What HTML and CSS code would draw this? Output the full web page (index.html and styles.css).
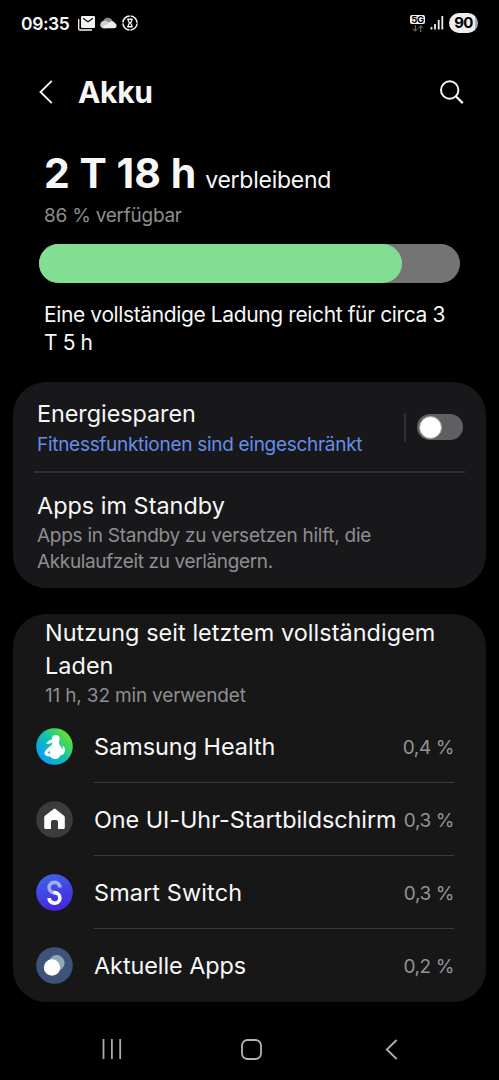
FILE: index.html
```html
<!DOCTYPE html>
<html lang="de">
<head>
<meta charset="utf-8">
<title>Akku</title>
<link rel="stylesheet" href="styles.css">
</head>
<body>
<div class="status">
  <span class="clock">09:35</span>
  <svg class="s-mail" width="17" height="15" viewBox="0 0 17 15"><path d="M.7 3v9.800q0 1.200 1.200 1.200H14" fill="none" stroke="#f4f4f4" stroke-width="1.300"/><rect x="3" y="0" width="14" height="12" rx="1.200" fill="#f4f4f4"/><path d="M5 2.300l5 3.500 5-3.500" fill="none" stroke="#111" stroke-width="1.300"/></svg>
  <svg class="s-cloud" width="17" height="12" viewBox="0 0 17 12"><path d="M3 5C4 1.500 6 .4 8.500.8c2.500.3 3.500 1.700 4 3.500L9 8z" fill="#8b8b8b"/><path d="M3.800 3.800Q7 3.500 10 6l5.500 3.500-10 1.700H3.500C-1 11-.8 4.500 3.800 3.800z" fill="#cfcfcf"/><path d="M8 6.500q2.500-3 5-2.200 1.500.5 1.600 1.800 2 .5 2 2.500 0 2.600-2.600 2.600H3.500L2 10.500z" fill="#eee"/></svg>
  <svg class="s-timer" width="16" height="16" viewBox="0 0 16 16"><circle cx="8" cy="8" r="7.100" fill="none" stroke="#f4f4f4" stroke-width="1.500" stroke-dasharray="10.150 1" stroke-dashoffset="-.5"/><path d="M5.300 4.200h5.400M5.300 11.800h5.400" stroke="#f4f4f4" stroke-width="1.400"/><path d="M6.300 4v1.800L7.500 8l-1.200 2.200V12M9.700 4v1.800L8.500 8l1.200 2.200V12" fill="none" stroke="#f4f4f4" stroke-width="1.300"/></svg>
  <span class="grow"></span>
  <span class="net"><b>5G</b><svg width="12" height="7" viewBox="0 0 12 7"><path d="M3.300 0v6M.8 3.700l2.500 2.500 2.500-2.500M8.700 7V1M6.200 3.300L8.700.8l2.500 2.500" fill="none" stroke="#8a8a8a" stroke-width=".9"/></svg></span>
  <svg class="s-bars" width="14" height="14" viewBox="0 0 14 14"><path d="M1.500 13.500V11M5 13.500V8M8.700 13.500V4M12.300 13.500V0" stroke="#ededed" stroke-width="1.800"/></svg>
  <span class="batt">90</span>
</div>
<header class="head">
  <svg width="16" height="26" viewBox="0 0 16 26"><path d="M13.800 1.800L2.500 13l11.300 11.200" fill="none" stroke="#f4f4f4" stroke-width="1.900"/></svg>
  <h1>Akku</h1>
  <svg width="25" height="25" viewBox="0 0 25 25"><circle cx="10.700" cy="10" r="8.700" fill="none" stroke="#f4f4f4" stroke-width="2"/><path d="M16.800 16.200l7 6.900" stroke="#f4f4f4" stroke-width="2.200"/></svg>
</header>
<section class="hero">
  <div class="remain"><b>2 T 18 h</b><span>verbleibend</span></div>
  <div class="avail">86 % verfügbar</div>
  <div class="bar"><div class="fill"></div></div>
  <p>Eine vollständige Ladung reicht für circa 3<br>T 5 h</p>
</section>
<section class="card saving">
  <div class="opt first">
    <div><div class="title t-en">Energiesparen</div><div class="sub blue">Fitnessfunktionen sind eingeschränkt</div></div>
    <div class="switchbox"><i class="vline"></i><i class="switch"><i class="knob"></i></i></div>
  </div>
  <div class="opt second">
    <div class="title t-apps">Apps im Standby</div>
    <div class="sub standby">Apps in Standby zu versetzen hilft, die<br><span class="tight">Akkulaufzeit zu verlängern.</span></div>
  </div>
</section>
<section class="card usage">
  <h2>Nutzung seit letztem vollständigem<br>Laden</h2>
  <div class="used">11 h, 32 min verwendet</div>
  <div class="row">
    <svg class="ico" viewBox="0 0 37 37"><defs><linearGradient id="g1" x1=".1" y1=".8" x2=".85" y2=".15"><stop offset="0" stop-color="#0c9df0"/><stop offset=".5" stop-color="#10c2b0"/><stop offset="1" stop-color="#63e32b"/></linearGradient></defs><circle cx="18.500" cy="18.500" r="18.300" fill="url(#g1)"/><circle cx="19.800" cy="11" r="3.900" fill="#fff"/><path d="M17 11.300q-4 .2-6.200 3.200l-.3 1.600q3.800.2 6.500-2.300z" fill="#fff"/><path d="M16.500 14h6.500q-.2 2.200 1.300 3.800 1.700 1.700 1.500 3.700 1.300-.5.800-2.300-.3-1.300 1-1.200 1.800 1.500 1.300 5-.8 4-4.600 4.500-1.300 3.500-5.500 3.500-3.300 0-4.700-2.400-5.700-.6-5.700-3.600 0-2.200 5.400-6.500 2.700-1.500 2.700-4.500z" fill="#fff"/><path d="M13.500 22.500l-1.900 2.500 2.800.8q-.8-1.600-.9-3.300z" fill="#12b0d0"/></svg>
    <div class="line"><span class="name n1">Samsung Health</span><span class="pct">0,4 %</span></div>
  </div>
  <div class="row">
    <svg class="ico" viewBox="0 0 37 37"><circle cx="18.500" cy="18.500" r="18.300" fill="#3b3b3b"/><path d="M8.200 16.500q0-1 .8-1.700l8.700-6.800q.9-.8 1.800 0l8.500 6.800q.8.700.8 1.700v10q0 1.500-1.500 1.500H22v-7q0-2-2-2h-3q-2 0-2 2v7H9.700q-1.500 0-1.500-1.500z" fill="#fff"/></svg>
    <div class="line"><span class="name n2">One UI-Uhr-Startbildschirm</span><span class="pct">0,3 %</span></div>
  </div>
  <div class="row">
    <svg class="ico" viewBox="0 0 37 37"><defs><linearGradient id="g3" x1=".3" y1="0" x2=".6" y2="1"><stop offset="0" stop-color="#3e64e8"/><stop offset="1" stop-color="#4624dd"/></linearGradient></defs><circle cx="18.500" cy="18.500" r="18.300" fill="url(#g3)"/><path d="M23.900 13.500a5.400 5.200 0 1 0-5.400 5.200" fill="none" stroke="#a4aef8" stroke-width="3.700"/><path d="M17.500 18.700h1a5.400 5.200 0 1 1-5.400 5.200" fill="none" stroke="#fff" stroke-width="3.700"/></svg>
    <div class="line"><span class="name n3">Smart Switch</span><span class="pct">0,3 %</span></div>
  </div>
  <div class="row">
    <svg class="ico" viewBox="0 0 37 37"><circle cx="18.500" cy="18.500" r="18.300" fill="#3d5379"/><circle cx="20.700" cy="16" r="7.900" fill="#91a7b8"/><circle cx="16" cy="20.500" r="8.200" fill="#fff"/></svg>
    <div class="line"><span class="name n4">Aktuelle Apps</span><span class="pct">0,2 %</span></div>
  </div>
</section>
<nav class="nav">
  <svg width="20" height="20" viewBox="0 0 20 20"><path d="M1.500 0v20M9.900 0v20M18.200 0v20" stroke="#aaa" stroke-width="1.800"/></svg>
  <svg class="home" width="21" height="21" viewBox="0 0 21 21"><rect x="1" y="1" width="19" height="19" rx="5.500" fill="none" stroke="#b4b4b4" stroke-width="1.800"/></svg>
  <svg width="13" height="21" viewBox="0 0 13 21"><path d="M11.600 1L1.800 10.500l9.800 9.500" fill="none" stroke="#b4b4b4" stroke-width="1.800"/></svg>
</nav>
</body>
</html>
```
FILE: styles.css
```css
* { box-sizing: border-box; }
body { margin: 0; width: 499px; height: 1080px; overflow: hidden; background: #000; color: #f7f7f7; font-family: Inter, "Liberation Sans", sans-serif; white-space: nowrap; display: flex; flex-direction: column; }
svg { display: block; flex: none; }
h1, h2, p { margin: 0; font-weight: 400; }
.grow { flex: 1; }
.status { height: 46px; display: flex; align-items: center; padding: 0 21px; }
.clock { font-size: 17.5px; font-weight: 600; width: 57px; letter-spacing: -.4px; }
.s-cloud { margin-left: 5px; }
.s-timer { margin-left: 5px; }
.net { display: flex; flex-direction: column; align-items: center; gap: 1px; }
.net b { width: 15px; height: 9px; border-radius: 2px; background: #f4f4f4; color: #000; font-size: 9.5px; line-height: 9px; letter-spacing: -.3px; text-align: center; }
.s-bars { margin: 0 5px; }
.batt { width: 29px; height: 20px; border-radius: 10px; background: linear-gradient(90deg, #eee 90%, #aaa 90%); color: #000; font-size: 15px; font-weight: 700; line-height: 20px; letter-spacing: -.6px; text-align: center; }
.head { height: 92px; padding: 0 35px 0 38px; display: flex; align-items: center; }
.head h1 { font-size: 30px; font-weight: 700; line-height: 40px; letter-spacing: -.3px; margin-left: 24px; flex: 1; }
.hero { height: 244px; padding: 10px 39px 0; }
.remain { display: flex; align-items: baseline; height: 50px; line-height: 50px; padding-left: 5px; gap: 9px; }
.remain b { font-size: 41px; font-weight: 700; }
.remain span { font-size: 23px; letter-spacing: -.25px; }
.avail { padding-left: 5px; margin-top: 6px; line-height: 24px; font-size: 19px; letter-spacing: -.25px; color: #8e8e8e; }
.bar { margin-top: 16px; height: 39px; border-radius: 20px; background: #747474; }
.fill { width: 86.2%; height: 100%; border-radius: 20px; background: #82de92; }
.hero p { padding-left: 5px; margin-top: 18px; font-size: 21px; line-height: 28px; letter-spacing: -.38px; }
.card { margin: 0 13px; border-radius: 33px; background: #18181a; }
.saving { height: 206px; padding: 0 21px; }
.opt { padding-left: 3px; }
.first { height: 91px; padding-top: 16px; border-bottom: 2px solid #303032; display: flex; justify-content: space-between; }
.title { font-size: 23.4px; line-height: 31px; }
.t-en { letter-spacing: -.05px; }
.t-apps { letter-spacing: .02px; }
.sub { font-size: 19px; line-height: 26px; letter-spacing: -.26px; color: #8e8e90; }
.blue { color: #668de9; margin-top: 3px; letter-spacing: -.29px; }
.standby { margin-top: 2px; }
.tight { letter-spacing: -.36px; }
.switchbox { display: flex; align-items: center; height: 30px; margin: 14px 2px 0 0; gap: 11px; }
.vline { width: 2px; height: 29px; background: #303032; }
.switch { width: 46px; height: 26px; border-radius: 13px; background: #5f5f62; padding: 1.5px 2px; }
.knob { display: block; width: 23px; height: 23px; border: 1px solid #a0a0a2; border-radius: 50%; background: #fff; }
.second { padding-top: 17px; }
.usage { margin-top: 26px; height: 388px; background: #171718; padding: 2px 32px 0 23px; }
.usage h2 { padding: 0 0 1px 9px; font-size: 23.4px; line-height: 33px; letter-spacing: .07px; }
.used { padding-left: 9px; font-size: 19px; line-height: 26px; height: 27px; letter-spacing: -.17px; color: #8e8e90; }
.row { height: 73px; display: flex; align-items: center; gap: 21px; }
.ico { width: 37px; height: 37px; }
.line { flex: 1; height: 73px; display: flex; align-items: center; justify-content: space-between; border-bottom: 1px solid #3a3a3b; }
.row:last-child .line { border: 0; }
.name { font-size: 23.4px; line-height: 31px; }
.n1 { letter-spacing: 0; }
.n2 { letter-spacing: -.05px; }
.n3 { letter-spacing: .14px; }
.n4 { letter-spacing: -.05px; }
.pct { font-size: 19px; letter-spacing: -.4px; padding-top: 2px; color: #949496; }
.row:last-child .pct { padding-top: 1px; }
.nav { height: 78px; padding: 16px 101px 0 102px; display: flex; align-items: center; justify-content: space-between; }
.home { margin-right: 4px; }
```
